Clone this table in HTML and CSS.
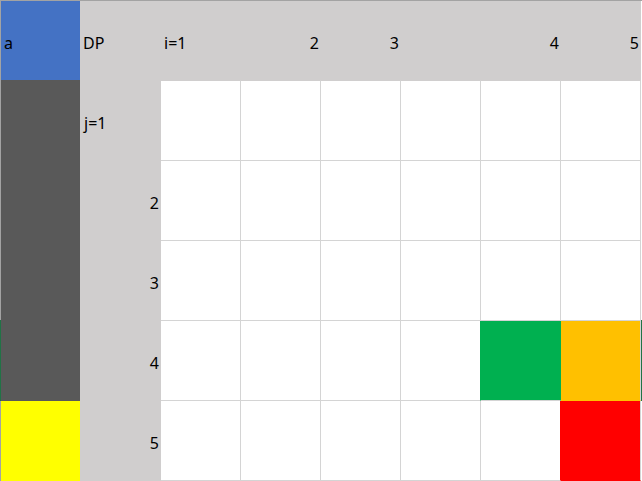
FILE: index.html
```html
<!DOCTYPE html>
<html>
<head>
<meta charset="utf-8">
<link rel="stylesheet" href="styles.css">
</head>
<body>
<div class="sheet">
  <div class="grid">
    <div class="cell c-blue">a</div>
    <div class="cell hdr">DP</div>
    <div class="cell hdr">i=1</div>
    <div class="cell hdr num">2</div>
    <div class="cell hdr num">3</div>
    <div class="cell hdr"></div>
    <div class="cell hdr num">4</div>
    <div class="cell hdr num">5</div>

    <div class="cell c-dark"></div>
    <div class="cell hdr lbl-top">j=1</div>
    <div class="cell data first"></div>
    <div class="cell data first"></div>
    <div class="cell data first"></div>
    <div class="cell data first"></div>
    <div class="cell data first"></div>
    <div class="cell data first"></div>

    <div class="cell c-dark"></div>
    <div class="cell hdr num">2</div>
    <div class="cell data"></div>
    <div class="cell data"></div>
    <div class="cell data"></div>
    <div class="cell data"></div>
    <div class="cell data"></div>
    <div class="cell data"></div>

    <div class="cell c-dark"></div>
    <div class="cell hdr num">3</div>
    <div class="cell data"></div>
    <div class="cell data"></div>
    <div class="cell data"></div>
    <div class="cell data"></div>
    <div class="cell data"></div>
    <div class="cell data"></div>

    <div class="cell c-dark"></div>
    <div class="cell hdr num">4</div>
    <div class="cell data"></div>
    <div class="cell data"></div>
    <div class="cell data"></div>
    <div class="cell data before-green"></div>
    <div class="cell data c-green"></div>
    <div class="cell data c-orange"></div>

    <div class="cell c-yellow"></div>
    <div class="cell hdr num">5</div>
    <div class="cell data"></div>
    <div class="cell data"></div>
    <div class="cell data"></div>
    <div class="cell data"></div>
    <div class="cell data before-red"></div>
    <div class="cell data c-red"></div>
  </div>
  <div class="selection"></div>
</div>
</body>
</html>
```

FILE: styles.css
```css
html, body {
  margin: 0;
  padding: 0;
  background: #ffffff;
}

body {
  width: 642px;
  height: 481px;
  overflow: hidden;
  font-family: "Noto Sans", "Open Sans", sans-serif;
  font-size: 16px;
  color: #000000;
}

.sheet {
  position: relative;
  width: 641px;
  height: 480px;
  border-top: 1px solid #a3a3a3;
  border-left: 1px solid #a3a3a3;
}

.grid {
  display: grid;
  grid-template-columns: 79px 81px repeat(6, 80px);
  grid-template-rows: 79px 81px repeat(4, 80px);
}

.cell {
  box-sizing: border-box;
  display: flex;
  align-items: center;
  padding: 4px 3px 0 3px;
  line-height: 1;
  white-space: nowrap;
}

.num {
  justify-content: flex-end;
  padding-right: 2px;
}

.hdr {
  background: #d0cece;
}

.lbl-top {
  padding-left: 4px;
}

.data {
  background: #ffffff;
  border-right: 1px solid #d4d4d4;
  border-bottom: 1px solid #d4d4d4;
}

.data.first {
  border-top: 1px solid #d0cece;
}

.c-blue { background: #4472c4; }
.c-dark { background: #595959; }
.c-yellow { background: #ffff00; }

.c-green {
  background: #00b050;
  border-right-color: #00b050;
}
.c-orange {
  background: #ffc000;
  border-bottom-color: #ffc000;
}
.c-red {
  background: #ff0000;
  border-bottom-color: #ff0000;
}
.before-green { border-right-color: #00b050; }
.before-red { border-right-color: #ff0000; }

.selection {
  position: absolute;
  left: -1px;
  top: 319px;
  width: 640px;
  height: 81px;
  border-left: 1px solid #217346;
  border-right: 2px solid #217346;
  pointer-events: none;
}
```
